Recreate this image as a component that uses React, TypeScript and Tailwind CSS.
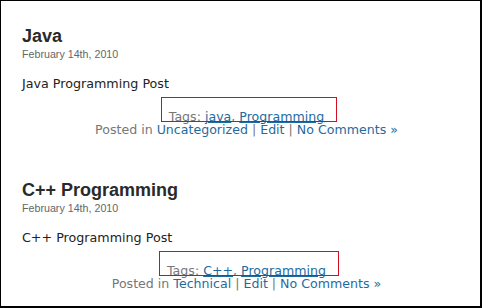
const posts = [
  {
    title: "Java",
    date: "February 14th, 2010",
    body: "Java Programming Post",
    tags: ["java", "Programming"],
    category: "Uncategorized",
  },
  {
    title: "C++ Programming",
    date: "February 14th, 2010",
    body: "C++ Programming Post",
    tags: ["C++", "Programming"],
    category: "Technical",
  },
];

function Post({ post }: { post: (typeof posts)[number] }) {
  return (
    <div className="h-[154px] pt-[25px]">
      <h2 className="text-[18px] leading-[21px] font-bold text-[#2a2a2a] font-['Liberation_Sans',Arial,sans-serif]">
        {post.title}
      </h2>
      <div className="text-[10.7px] leading-[14px] text-[#666] font-['Liberation_Sans',Arial,sans-serif]">
        {post.date}
      </div>
      <p className="mt-[15px] text-[12.7px] leading-[16px] text-[#222] font-['DejaVu_Sans',sans-serif]">
        {post.body}
      </p>
      <div className="mt-[18px] text-center text-[12.6px] leading-[13px] text-[#777] font-['DejaVu_Sans',sans-serif] pl-[12px]">
        <div className="relative inline-block">
          <span className="absolute left-[-8px] right-[-13px] top-[-13px] bottom-[1px] border border-[#d01020]" />
          Tags:{" "}
          {post.tags.map((t, i) => (
            <span key={t}>
              <a className="text-[#1f6b9e] underline">{t}</a>
              {i < post.tags.length - 1 ? ", " : ""}
            </span>
          ))}
        </div>
        <div>
          Posted in <a className="text-[#1f6b9e]">{post.category}</a> |{" "}
          <a className="text-[#1f6b9e]">Edit</a> |{" "}
          <a className="text-[#1f6b9e]">No Comments »</a>
        </div>
      </div>
    </div>
  );
}

export default function App() {
  return (
    <div className="w-[482px] h-[308px] bg-white border-l border-t border-r-2 border-b-2 border-black overflow-hidden px-[21px]">
      {posts.map((p) => (
        <Post key={p.title} post={p} />
      ))}
    </div>
  );
}
